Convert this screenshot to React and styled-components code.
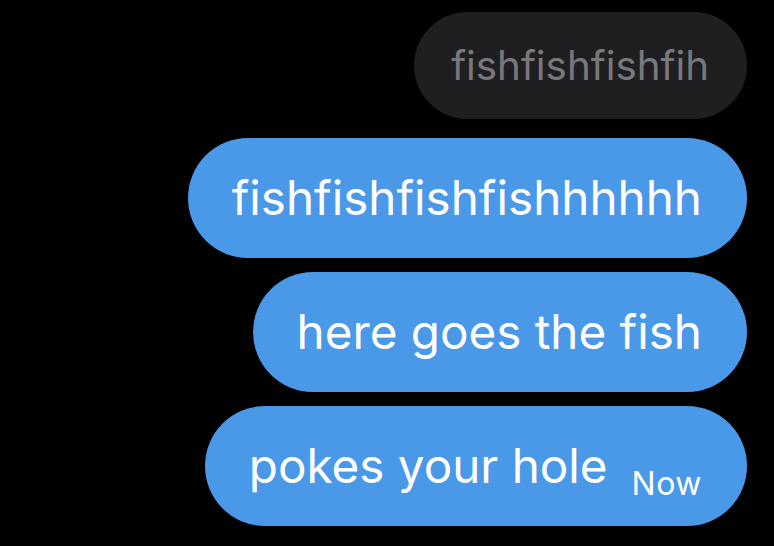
import styled, { createGlobalStyle } from "styled-components";

const GlobalStyle = createGlobalStyle`
  html, body {
    margin: 0;
    background: #000;
  }
  body {
    font-family: Inter, "Liberation Sans", sans-serif;
  }
`;

const Thread = styled.div`
  display: flex;
  flex-direction: column;
  align-items: flex-end;
  padding: 12px 27px 0 0;
  width: 774px;
  height: 546px;
  box-sizing: border-box;
  overflow: hidden;
`;

const Bubble = styled.div`
  display: flex;
  align-items: baseline;
  margin-top: ${(p) => p.gap || 0}px;
  padding: 0 ${(p) => (p.received ? 38 : 45)}px 0
    ${(p) => (p.received ? 37 : 44)}px;
  height: ${(p) => (p.received ? 107 : 120)}px;
  line-height: ${(p) => (p.received ? 107 : 120)}px;
  border-radius: 60px;
  background: ${(p) => (p.received ? "#1f1f21" : "#4a99e8")};
  color: ${(p) => (p.received ? "#78787c" : "#fff")};
  font-size: ${(p) => (p.received ? 40.3 : 47.6)}px;
  white-space: nowrap;
`;

const Stamp = styled.span`
  margin-left: 24px;
  font-size: 32px;
  letter-spacing: 0.5px;
  position: relative;
  top: 12px;
`;

export default function App() {
  return (
    <>
      <GlobalStyle />
      <Thread>
        <Bubble received>fishfishfishfih</Bubble>
        <Bubble gap={19}>fishfishfishfishhhhhh</Bubble>
        <Bubble gap={14}>here goes the fish</Bubble>
        <Bubble gap={14}>
          pokes your hole
          <Stamp>Now</Stamp>
        </Bubble>
      </Thread>
    </>
  );
}
